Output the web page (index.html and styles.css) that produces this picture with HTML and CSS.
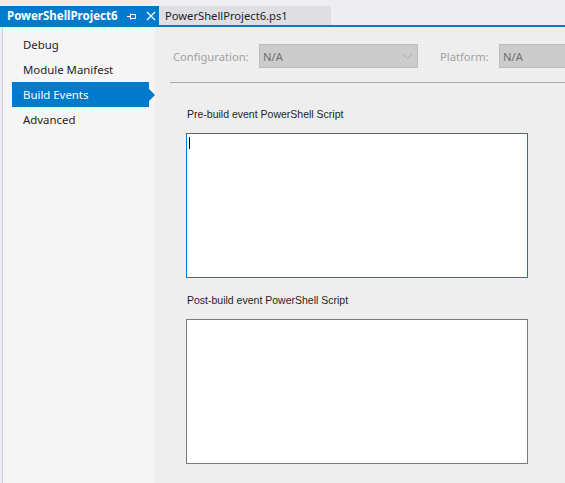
FILE: index.html
```html
<!DOCTYPE html>
<html>
<head>
<meta charset="utf-8">
<link rel="stylesheet" href="styles.css">
</head>
<body>
<div class="tabbar">
  <div class="tab tab-active">
    <span class="tab-title">PowerShellProject6</span>
    <svg class="pin" width="10" height="10" viewBox="0 0 10 10"><path d="M0 5.5H3.5M3.5 2.5V8.5M3.5 3.5H8.5V7.5H3.5" stroke="#fff" stroke-width="1" fill="none"/></svg>
    <svg class="close" width="10" height="10" viewBox="0 0 10 10"><path d="M1 1L9 9M9 1L1 9" stroke="#fff" stroke-width="1.3" fill="none"/></svg>
  </div>
  <div class="tab tab-inactive"><span>PowerShellProject6.ps1</span></div>
</div>
<div class="tabline"></div>
<div class="content">
  <nav class="sidebar">
    <div class="nav-item">Debug</div>
    <div class="nav-item">Module Manifest</div>
    <div class="nav-item nav-selected">Build Events</div>
    <div class="nav-item">Advanced</div>
  </nav>
  <main class="main">
    <div class="config-row">
      <span class="cfg-label">Configuration:</span>
      <div class="combo combo-config"><span>N/A</span>
        <svg class="chev" width="9" height="5" viewBox="0 0 9 5"><path d="M0.5 0.5L4.5 4.5L8.5 0.5" stroke="#a8a8a8" stroke-width="1" fill="none"/></svg>
      </div>
      <span class="cfg-label plat-label">Platform:</span>
      <div class="combo combo-plat"><span>N/A</span></div>
    </div>
    <div class="sep"></div>
    <section class="events">
      <div class="ev-label">Pre-build event PowerShell Script</div>
      <div class="ev-box ev-focus"><span class="caret"></span></div>
      <div class="ev-label ev-label2">Post-build event PowerShell Script</div>
      <div class="ev-box"></div>
    </section>
  </main>
</div>
</body>
</html>
```

FILE: styles.css
```css
* { box-sizing: border-box; }
html, body { margin: 0; padding: 0; }
body {
  width: 565px;
  height: 483px;
  overflow: hidden;
  background: #eeeef2;
  font-family: "Noto Sans", "Liberation Sans", sans-serif;
  font-size: 11.2px;
  color: #1e1e1e;
}
.tabbar {
  display: flex;
  height: 25px;
  padding-top: 6px;
}
.tab {
  display: flex;
  align-items: center;
  height: 19px;
}
.tab-active {
  width: 159px;
  background: #007acc;
  color: #fff;
  padding-left: 7px;
}
.tab-title {
  font-weight: bold;
  font-size: 11.5px;
  width: 118px;
}
.pin { margin-left: 2px; }
.close { margin-left: 9px; }
.tab-inactive {
  width: 172px;
  background: #dfdfe3;
  padding-left: 6px;
  color: #1e1e1e;
}
.tabline {
  height: 2px;
  background: #007acc;
}
.content {
  display: flex;
  height: 456px;
}
.sidebar {
  width: 153px;
  margin-left: 2px;
  border-left: 1px solid #cfcfe0;
  background: #f5f5f5;
  padding-top: 5px;
}
.nav-item {
  position: relative;
  height: 25px;
  line-height: 25px;
  margin-left: 9px;
  width: 137px;
  padding-left: 11px;
  color: #1e1e1e;
  font-size: 11.4px;
}
.nav-selected {
  background: #007acc;
  color: #fff;
}
.nav-selected::after {
  content: "";
  position: absolute;
  right: -6px;
  top: 7px;
  border-left: 6px solid #007acc;
  border-top: 6px solid transparent;
  border-bottom: 6px solid transparent;
}
.main {
  flex: 1;
  background: #eeeeee;
  padding-left: 15px;
}
.config-row {
  display: flex;
  align-items: center;
  height: 24px;
  margin-top: 17px;
  padding-left: 3px;
}
.cfg-label {
  color: #a2a2a2;
  width: 86px;
}
.plat-label { width: 59px; margin-left: 22px; }
.combo {
  display: flex;
  align-items: center;
  height: 24px;
  background: #cccccc;
  border: 1px solid #bcbcbc;
  color: #6d6d6d;
  padding-left: 3px;
}
.combo-config {
  width: 159px;
  justify-content: space-between;
  padding-right: 5px;
}
.combo-plat {
  flex: 1;
  border-right: none;
}
.sep {
  height: 1px;
  background: #a8a8a8;
  margin-top: 14px;
}
.events {
  padding-left: 16px;
}
.ev-label {
  margin-top: 24px;
  height: 14px;
  line-height: 14px;
  padding-left: 1px;
  font-family: "Liberation Sans", Arial, sans-serif;
  font-size: 10.5px;
  color: #1e1e1e;
}
.ev-label2 { margin-top: 15px; }
.ev-box {
  margin-top: 12px;
  width: 342px;
  height: 145px;
  background: #fff;
  border: 1px solid #7a7a7a;
  padding: 3px 2px;
}
.ev-focus { border-color: #0078d7; }
.caret {
  display: block;
  width: 1px;
  height: 12px;
  background: #000;
}
```
